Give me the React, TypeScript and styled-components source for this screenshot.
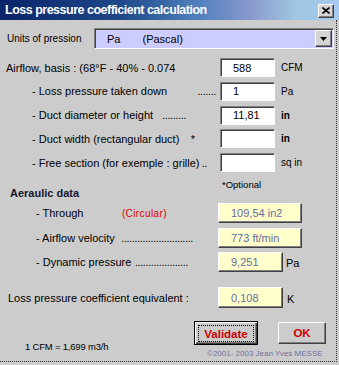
import styled, { createGlobalStyle } from "styled-components";

const GlobalStyle = createGlobalStyle`
  html, body {
    margin: 0;
    padding: 0;
    background: #cccccc;
  }
  body {
    font-family: "Liberation Sans", Arial, sans-serif;
    color: #000;
  }
`;

type InputRow = {
  label: string;
  indent: number;
  tail?: string;
  dense?: boolean;
  tailRight?: number;
  value: string;
  unit: string;
  unitBold?: boolean;
};

const inputRows: InputRow[] = [
  { label: "Airflow, basis : (68°F - 40% - 0.074", indent: 0, value: "588", unit: "CFM" },
  { label: "- Loss pressure taken down", indent: 26, tail: ".......", dense: true, tailRight: 4, value: "1", unit: "Pa" },
  { label: "- Duct diameter or height", indent: 26, tail: ".........", dense: true, tailRight: 34, value: "11,81", unit: "in", unitBold: true },
  { label: "- Duct width (rectangular duct)", indent: 26, tail: "*", tailRight: 25, value: "", unit: "in", unitBold: true },
  { label: "- Free section (for exemple : grille)", indent: 26, tail: "..", dense: true, tailRight: 13, value: "", unit: "sq in" },
];

type ResultRow = {
  label: string;
  tail?: string;
  red?: boolean;
  tailRight: number;
  value: string;
  width: number;
  unit?: string;
};

const resultRows: ResultRow[] = [
  { label: "- Through", tail: "(Circular)", red: true, tailRight: 51, value: "109,54 in2", width: 84 },
  { label: "- Airflow velocity", tail: "...........................", tailRight: 25, value: "773 ft/min", width: 84 },
  { label: "- Dynamic pressure", tail: "....................", tailRight: 30, value: "9,251", width: 65, unit: "Pa" },
];

export default function App() {
  return (
    <>
      <GlobalStyle />
      <Window>
        <TitleBar>
          <Title>Loss pressure coefficient calculation</Title>
          <CloseButton aria-label="close">
            <svg width="8" height="7" viewBox="0 0 8 7">
              <path d="M0.5 0.5 L7.5 6.5 M7.5 0.5 L0.5 6.5" stroke="#000" strokeWidth="1.6" />
            </svg>
          </CloseButton>
        </TitleBar>

        <Client>
          <UnitsRow>
            <UnitsLabel>Units of pression</UnitsLabel>
            <Combo>
              <ComboCode>Pa</ComboCode>
              <ComboDesc>(Pascal)</ComboDesc>
              <ComboArrow>
                <svg width="7" height="4" viewBox="0 0 7 4">
                  <path d="M0 0 H7 L3.5 4 Z" fill="#000" />
                </svg>
              </ComboArrow>
            </Combo>
          </UnitsRow>

          <InputGrid>
            {inputRows.map((row) => (
              <FieldRow key={row.label}>
                <Label $indent={row.indent}>
                  <span>{row.label}</span>
                  {row.tail && (
                    <Leader $dense={row.dense} $right={row.tailRight ?? 0}>
                      {row.tail}
                    </Leader>
                  )}
                </Label>
                <TextInput>{row.value}</TextInput>
                <Unit $bold={row.unitBold}>{row.unit}</Unit>
              </FieldRow>
            ))}
          </InputGrid>

          <SectionBand>
            <SectionTitle>Aeraulic data</SectionTitle>
            <OptionalNote>*Optional</OptionalNote>
          </SectionBand>

          <ResultGrid>
            {resultRows.map((row) => (
              <FieldRow key={row.label}>
                <Label $indent={30}>
                  <span>{row.label}</span>
                  {row.tail && (
                    <Leader $dense={!row.red} $red={row.red} $right={row.tailRight}>
                      {row.tail}
                    </Leader>
                  )}
                </Label>
                <ResultCell>
                  <ReadOnly $width={row.width}>{row.value}</ReadOnly>
                  {row.unit && <ResultUnit>{row.unit}</ResultUnit>}
                </ResultCell>
              </FieldRow>
            ))}
          </ResultGrid>

          <CoefRow>
            <Label $indent={2}>Loss pressure coefficient equivalent :</Label>
            <ResultCell>
              <ReadOnly $width={65} $tall>0,108</ReadOnly>
              <ResultUnit $gap={4}>K</ResultUnit>
            </ResultCell>
          </CoefRow>

          <Footer>
            <ConversionNote>1 CFM = 1,699 m3/h</ConversionNote>
            <FooterRight>
              <Buttons>
                <DefaultButton>
                  <FocusRing>Validate</FocusRing>
                </DefaultButton>
                <PlainButton>OK</PlainButton>
              </Buttons>
              <Copyright>©2001- 2003 Jean Yves MESSE</Copyright>
            </FooterRight>
          </Footer>
        </Client>
      </Window>
    </>
  );
}

const Window = styled.div`
  width: 339px;
  height: 365px;
  background: #cccccc;
  display: flex;
  flex-direction: column;
  overflow: hidden;
`;

const TitleBar = styled.div`
  height: 20px;
  flex: none;
  display: flex;
  align-items: center;
  justify-content: space-between;
  padding: 0 5px 0 5px;
  background: linear-gradient(
    to right,
    #0a246a 0%,
    #1d4788 35%,
    #4f7fbd 58%,
    #8c9ccd 75%,
    #9fc6e2 87%,
    #a6caf0 100%
  );
`;

const Title = styled.div`
  color: #fff;
  font-weight: bold;
  font-size: 12.5px;
  letter-spacing: -0.5px;
  white-space: nowrap;
`;

const CloseButton = styled.div`
  box-sizing: border-box;
  width: 16px;
  height: 14px;
  margin-top: 1px;
  display: flex;
  align-items: center;
  justify-content: center;
  background: #d4d4d4;
  border: 1px solid;
  border-color: #fff #404040 #404040 #fff;
  box-shadow: inset -1px -1px #808080;
`;

const Client = styled.div`
  box-sizing: border-box;
  width: 337px;
  height: 342px;
  padding-left: 6px;
  border-right: 1px dotted #303030;
  border-bottom: 1px dotted #303030;
  display: flex;
  flex-direction: column;
`;

const UnitsRow = styled.div`
  margin-top: 8px;
  height: 21px;
  display: flex;
  align-items: center;
`;

const UnitsLabel = styled.div`
  width: 87px;
  padding-left: 1px;
  font-size: 10px;
`;

const sunken = `
  border: 1px solid;
  border-color: #808080 #ffffff #ffffff #808080;
  box-shadow: inset 1px 1px #404040;
`;

const raised = `
  border: 1px solid;
  border-color: #ffffff #404040 #404040 #ffffff;
  box-shadow: inset -1px -1px #808080;
`;

const Combo = styled.div`
  box-sizing: border-box;
  width: 240px;
  height: 21px;
  display: flex;
  align-items: center;
  background: #ccccff;
  font-size: 11px;
  ${sunken}
`;

const ComboCode = styled.span`
  margin-left: 12px;
`;

const ComboDesc = styled.span`
  margin-left: 22px;
`;

const ComboArrow = styled.div`
  box-sizing: border-box;
  margin-left: auto;
  margin-right: 1px;
  width: 17px;
  height: 17px;
  display: flex;
  align-items: center;
  justify-content: center;
  background: #d4d4d4;
  ${raised}
`;

const InputGrid = styled.div`
  margin-top: 9px;
  display: grid;
  grid-auto-rows: 19px;
  row-gap: 4.75px;
`;

const FieldRow = styled.div`
  display: grid;
  grid-template-columns: 212px auto 1fr;
  align-items: center;
  ${InputGrid} & {
    grid-template-columns: 214px 55px 1fr;
  }
`;

const Label = styled.div<{ $indent: number }>`
  display: flex;
  align-items: center;
  padding-left: ${(p) => p.$indent}px;
  font-size: 11px;
  white-space: nowrap;
  overflow: hidden;
`;

const Leader = styled.span<{ $dense?: boolean; $red?: boolean; $right: number }>`
  margin-left: auto;
  margin-right: ${(p) => p.$right}px;
  letter-spacing: ${(p) => (p.$dense ? "-0.4px" : p.$red ? "0.4px" : "0")};
  color: ${(p) => (p.$red ? "#dd0000" : "#000")};
  font-size: ${(p) => (p.$red ? "10px" : "11px")};
`;

const TextInput = styled.div`
  box-sizing: border-box;
  width: 55px;
  height: 19px;
  padding-left: 12px;
  display: flex;
  align-items: center;
  background: #fff;
  font-size: 11px;
  ${sunken}
`;

const Unit = styled.div<{ $bold?: boolean }>`
  padding-left: 6px;
  font-size: 10px;
  font-weight: ${(p) => (p.$bold ? "bold" : "normal")};
`;

const SectionBand = styled.div`
  height: 27px;
  display: flex;
  align-items: flex-start;
`;

const SectionTitle = styled.div`
  width: 212px;
  padding-left: 4px;
  padding-top: 15px;
  font-size: 11px;
  line-height: 12px;
  font-weight: bold;
  color: #151530;
`;

const OptionalNote = styled.div`
  padding-top: 7px;
  font-size: 9.5px;
  line-height: 12px;
`;

const ResultGrid = styled.div`
  margin-top: 4px;
  display: grid;
  grid-auto-rows: 20px;
  row-gap: 4.5px;
`;

const ResultCell = styled.div`
  display: flex;
  align-items: center;
`;

const ReadOnly = styled.div<{ $width: number; $tall?: boolean }>`
  box-sizing: border-box;
  width: ${(p) => p.$width}px;
  height: ${(p) => (p.$tall ? 21 : 20)}px;
  padding-left: 12px;
  display: flex;
  align-items: center;
  background: #ffffcc;
  color: #6a6a9e;
  font-size: 11px;
  ${raised}
`;

const ResultUnit = styled.span<{ $gap?: number }>`
  margin-left: ${(p) => p.$gap ?? 3}px;
  margin-top: 2px;
  font-size: 11px;
`;

const CoefRow = styled(FieldRow)`
  margin-top: 15px;
  height: 21px;
`;

const Footer = styled.div`
  margin-top: 13px;
  display: flex;
`;

const ConversionNote = styled.div`
  width: 169px;
  padding-left: 19px;
  padding-top: 20px;
  font-size: 9.5px;
  line-height: 12px;
  letter-spacing: -0.2px;
`;

const FooterRight = styled.div`
  display: flex;
  flex-direction: column;
`;

const Buttons = styled.div`
  display: flex;
  align-items: flex-start;
  gap: 20px;
`;

const buttonText = `
  color: #cc0000;
  font-weight: bold;
  font-size: 11.5px;
  background: #cccccc;
`;

const DefaultButton = styled.div`
  box-sizing: border-box;
  width: 64px;
  height: 24px;
  padding: 3px 3px 2px 3px;
  border: 1px solid #000;
  box-shadow: inset 1px 1px #fff, inset -1px -1px #404040, inset -2px -2px #808080;
  display: flex;
  ${buttonText}
`;

const FocusRing = styled.div`
  flex: 1;
  display: flex;
  align-items: center;
  justify-content: center;
  border: 1px dotted #000;
`;

const PlainButton = styled.div`
  box-sizing: border-box;
  width: 48px;
  height: 22px;
  margin-top: 1px;
  display: flex;
  align-items: center;
  justify-content: center;
  ${raised}
  ${buttonText}
`;

const Copyright = styled.div`
  margin-top: 4px;
  padding-left: 13px;
  font-size: 8px;
  line-height: 10px;
  color: #7070a0;
  white-space: nowrap;
`;
